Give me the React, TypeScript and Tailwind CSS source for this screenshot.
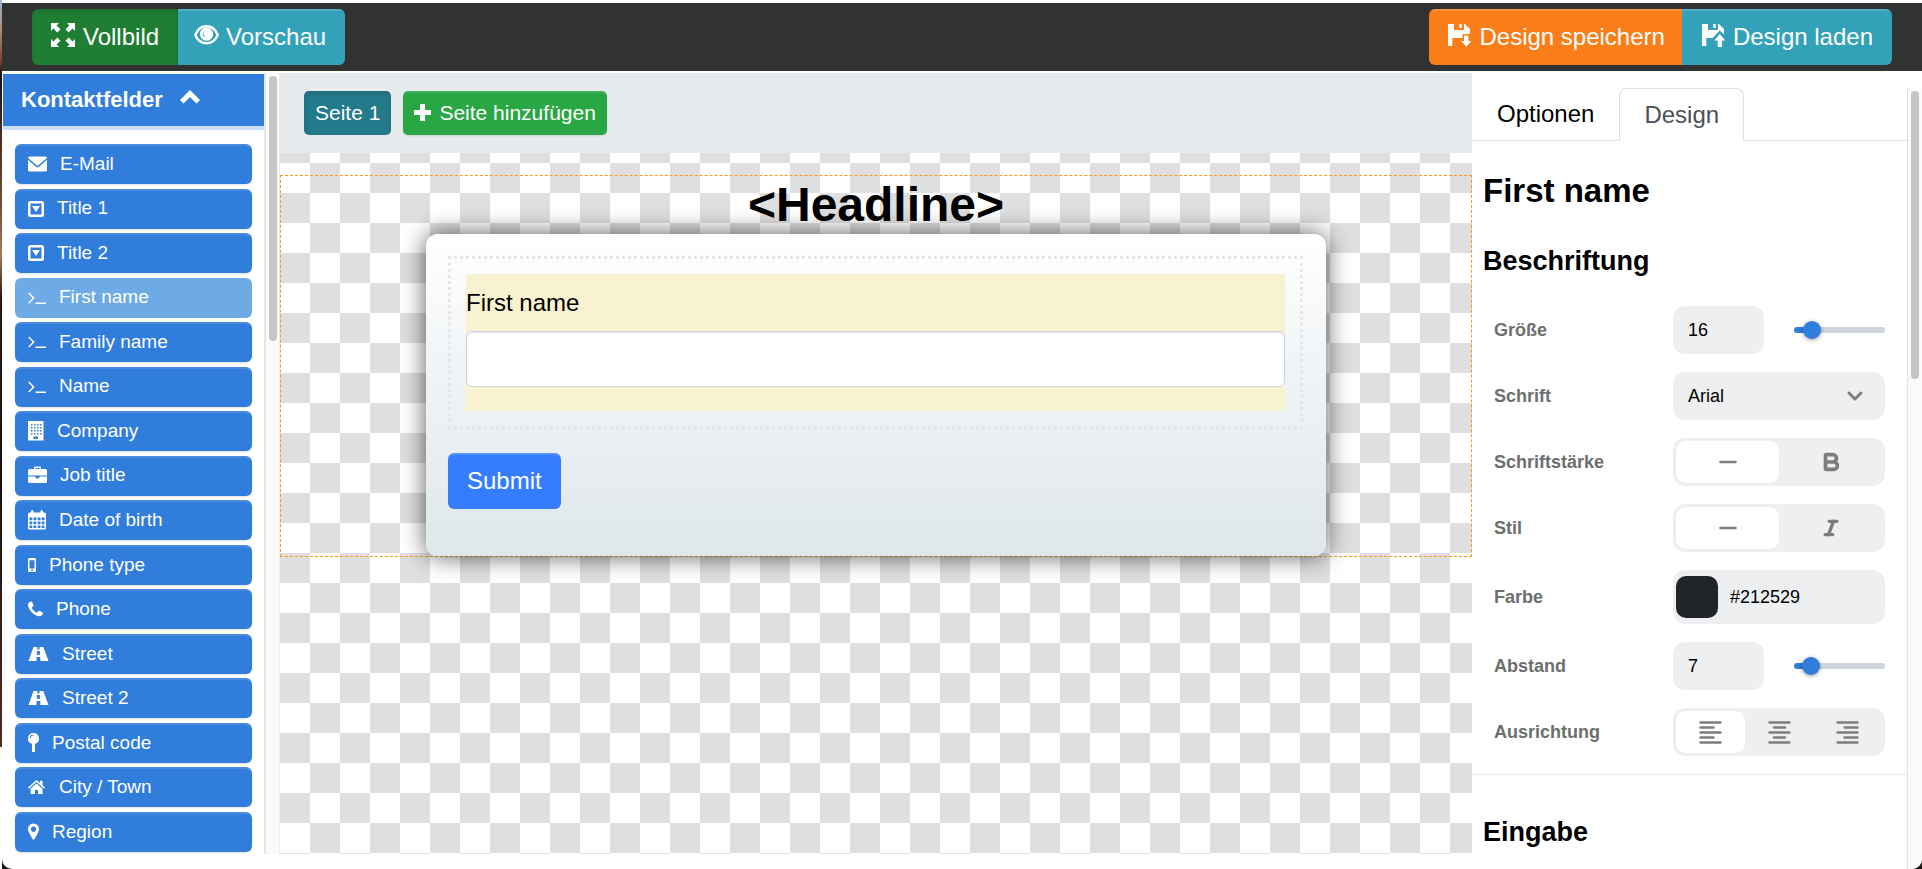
import React, { useState } from 'react';
import { Bold, ChevronDown, Italic, Minus } from 'lucide-react';

const ICON = 'shrink-0 fill-current';
const BAR_ICON = 'mb-1 shrink-0 fill-current';

const FullscreenIcon = () => (
    <svg width="24" height="24" viewBox="0 0 24 24" className={BAR_ICON}>
        <path d="M0 0h8L5.6 2.4l3.9 3.9-3.2 3.2-3.9-3.9L0 8z" />
        <path d="M24 0v8l-2.4-2.4-3.9 3.9-3.2-3.2 3.9-3.9L16 0z" />
        <path d="M0 24v-8l2.4 2.4 3.9-3.9 3.2 3.2-3.9 3.9L8 24z" />
        <path d="M24 24h-8l2.4-2.4-3.9-3.9 3.2-3.2 3.9 3.9L24 16z" />
    </svg>
);

const EyeIcon = () => (
    <svg width="25" height="24" viewBox="0 0 25 24" className={BAR_ICON}>
        <path
            d="M1.300 12C3.500 6.500 7.500 3.300 12.500 3.300S21.500 6.500 23.700 12C21.500 17.300 17.500 20.300 12.500 20.300S3.500 17.300 1.300 12z"
            fill="none"
            stroke="currentColor"
            strokeWidth="2.400"
            strokeLinejoin="round"
        />
        <path fillRule="evenodd" d="M12.500 4.500a6.600 6.600 0 1 1 0 13.200 6.600 6.600 0 0 1 0-13.200zM10.800 7.800a4 4 0 0 0-1.500 5.500l2.700.700a3.500 3.500 0 0 1-1.200-6.200z" />
    </svg>
);

const SaveIcon = () => (
    <svg width="24" height="24" viewBox="0 0 24 24" className={BAR_ICON}>
        <path d="M1 1h6v6h10V1h1l5 5v5h-7.500v4H5.300v8H1z" />
        <path d="M12.300 1h2.400v4h-2.400zM17 12.500h4.300V18H24.500l-5.300 5.800L14 18h3z" />
    </svg>
);

const LoadIcon = () => (
    <svg width="24" height="24" viewBox="0 0 24 24" className={BAR_ICON}>
        <path d="M1 1h6v6h10V1h1l5 5v5.500L18.800 7.500 11.500 15H5.300v8H1z" />
        <path d="M12.300 1h2.400v4h-2.400zM18.800 11l5.500 6.500h-3.400V24h-4.200v-6.500H13.300z" />
    </svg>
);

// Feld-Icons, alle 20px hoch, Breite je nach Glyph
const shapes: Record<string, { w: number; art: React.ReactNode }> = {
    mail: {
        w: 19,
        art: <path d="M1.500 2.500h16a1.500 1.500 0 0 1 1.500 1.500l-9.500 8L0 4a1.500 1.500 0 0 1 1.500-1.500zM0 5.800l8 6.900c1 .8 2 .8 3 0l8-6.900V16a1.500 1.500 0 0 1-1.500 1.500h-16A1.500 1.500 0 0 1 0 16z" />,
    },
    caret: {
        w: 16,
        art: <path fillRule="evenodd" d="M2.500 2h11A2.500 2.500 0 0 1 16 4.500v11a2.500 2.500 0 0 1-2.500 2.500h-11A2.500 2.500 0 0 1 0 15.500v-11A2.500 2.500 0 0 1 2.500 2zm0 2.500v11h11v-11zM4 7h8l-4 6z" />,
    },
    terminal: {
        w: 18,
        art: <path d="M.3 5.600l1-1L6.700 10l-5.400 5.400-1-1L4.600 10zM7.500 14.500H18v1.500H7.500z" />,
    },
    building: {
        w: 16,
        art: (
            <path
                fillRule="evenodd"
                d="M0 0h15.500v19.500H0zM3 3v1.500h1.500V3zm3 0v1.500h1.500V3zm3 0v1.500h1.500V3zm3 0v1.500h1.500V3zM3 6v1.500h1.500V6zm3 0v1.500h1.500V6zm3 0v1.500h1.500V6zm3 0v1.500h1.500V6zM3 9v1.500h1.500V9zm3 0v1.500h1.500V9zm3 0v1.500h1.500V9zm3 0v1.500h1.500V9zM3 12v1.500h1.500V12zm9 0v1.500h1.500V12zM6 12v1.500h1.500V12zm3 0v1.500h1.500V12zm-3.500 3.500V18H10v-2.500z"
            />
        ),
    },
    briefcase: {
        w: 19,
        art: (
            <path
                fillRule="evenodd"
                d="M6 3V1.800Q6 .5 7.300.5h4.400Q13 .5 13 1.800V3h4.500q1.500 0 1.500 1.500V9.500H0V4.500Q0 3 1.500 3zM7.500 2v1h4V2zM0 10.500h7.300v.5q.3 1.500 2.200 1.500t2.200-1.500v-.5H19V15.500q0 1.500-1.500 1.500h-16Q0 17 0 15.500z"
            />
        ),
    },
    calendar: {
        w: 18,
        art: (
            <>
                <path d="M0 4q0-1.500 1.500-1.500H3V1.500Q3 0 4.300 0t1.300 1.500v1h6.800v-1Q12.400 0 13.700 0T15 1.500v1h1.500Q18 2.500 18 4v3H0z" />
                <path fillRule="evenodd" d="M0 6h18v12q0 1.500-1.500 1.500h-15Q0 19.500 0 18zm1.500 1.500v2.800h2.800V7.500zm4 0v2.800h2.800V7.500zm4.200 0v2.800h2.800V7.500zm4 0v2.800h2.800V7.500zm-12.200 4v2.800h2.800v-2.800zm4 0v2.800h2.800v-2.800zm4.200 0v2.800h2.800v-2.800zm4 0v2.800h2.800v-2.800zm-12.200 4v2.500h2.800v-2.500zm4 0v2.500h2.800v-2.500zm4.200 0v2.500h2.800v-2.500zm4 0v2.500h2.800v-2.500z" />
            </>
        ),
    },
    mobile: {
        w: 8,
        art: <path fillRule="evenodd" d="M1.500 3h5Q8 3 8 4.500v11Q8 17 6.500 17h-5Q0 17 0 15.500v-11Q0 3 1.500 3zm0 2.300v8.200h5V5.300zM4 14.300a.9.9 0 1 0 .1 0z" />,
    },
    phone: {
        w: 15,
        art: <path d="M3.300 2.600C4 2.500 5.600 6 5.600 6.500c0 1-1.800 1.600-1.800 2.200C3.800 9.900 7.600 13.600 8.900 13.600c.6 0 1.300-1.800 2.200-1.800.6 0 3.900 1.700 3.900 2.200 0 2-1.800 3.200-3.700 3.200C6.500 17.200 0 10.700 0 6c0-1.800 1.300-3.300 3.300-3.400z" />,
    },
    road: {
        w: 21,
        art: <path fillRule="evenodd" d="M5.500 3h3.800v2.500h2.200V3h3.800L20.500 17h-8.200v-4H8.500v4H.5zM9 7l-.3 3.800h3.400L11.800 7z" />,
    },
    pin: {
        w: 11,
        art: <path fillRule="evenodd" d="M5.500 0a5.500 5.500 0 0 1 1.500 10.800V19H4v-8.200A5.500 5.500 0 0 1 5.500 0zm-.3 1.500A3.800 3.800 0 0 0 1.700 5h.9A2.900 2.900 0 0 1 5.200 2.400z" />,
    },
    home: {
        w: 18,
        art: <path d="M8.500 3l3.500 3.100V3.700h2.600v4.700l2.600 2.300-1 1.100L8.500 5 .9 11.800l-1-1.100zM8.500 6.500l6 5.300V17H10v-4H7v4H2.600v-5.200z" />,
    },
    marker: {
        w: 11,
        art: <path fillRule="evenodd" d="M5.500 1.500A5.500 5.500 0 0 1 11 7c0 2-.8 3.200-1.500 4.700L6.500 17q-1 1.500-2 0l-3-5.300C.8 10.200 0 9 0 7a5.500 5.500 0 0 1 5.500-5.500zm0 3a2.700 2.700 0 1 0 .1 0z" />,
    },
};

const fields = [
    { label: 'E-Mail', icon: 'mail' },
    { label: 'Title 1', icon: 'caret' },
    { label: 'Title 2', icon: 'caret' },
    { label: 'First name', icon: 'terminal' },
    { label: 'Family name', icon: 'terminal' },
    { label: 'Name', icon: 'terminal' },
    { label: 'Company', icon: 'building' },
    { label: 'Job title', icon: 'briefcase' },
    { label: 'Date of birth', icon: 'calendar' },
    { label: 'Phone type', icon: 'mobile' },
    { label: 'Phone', icon: 'phone' },
    { label: 'Street', icon: 'road' },
    { label: 'Street 2', icon: 'road' },
    { label: 'Postal code', icon: 'pin' },
    { label: 'City / Town', icon: 'home' },
    { label: 'Region', icon: 'marker' },
];

const TopBar = () => (
    <header className="flex h-[68px] shrink-0 items-center justify-between bg-[#313333] pl-[30px] pr-[30px] text-[24px] text-white">
        <div className="flex h-14 overflow-hidden rounded-md">
            <button className="flex items-center gap-2 bg-[#1f7e34] px-[19px] shadow-[inset_0_3px_5px_rgba(0,0,0,0.13)]">
                <FullscreenIcon />
                Vollbild
            </button>
            <button className="flex items-center gap-[7px] bg-[#33a2b9] pl-4 pr-[19px] shadow-[inset_0_2px_0_rgba(255,255,255,0.15)]">
                <EyeIcon />
                Vorschau
            </button>
        </div>
        <div className="flex h-14 overflow-hidden rounded-md">
            <button className="flex items-center gap-2 bg-[#f97e18] pl-[18px] pr-[17px] shadow-[inset_0_2px_0_rgba(255,255,255,0.15)]">
                <SaveIcon />
                Design speichern
            </button>
            <button className="flex items-center gap-2 bg-[#33a2b9] px-[19px] shadow-[inset_0_2px_0_rgba(255,255,255,0.15)]">
                <LoadIcon />
                Design laden
            </button>
        </div>
    </header>
);

const Sidebar = () => (
    <aside className="mb-[15px] flex w-[278px] shrink-0">
        <div className="flex min-h-0 flex-1 flex-col border-r-2 border-[#e4e4e4] pl-px pt-px">
            <button className="box-content flex h-[50px] shrink-0 items-center gap-[17px] border-b-4 border-[#cadffb] bg-[#307ddb] pb-0.5 pl-[18px] text-[22px] font-bold text-white">
                Kontaktfelder
                <svg width="20" height="20" viewBox="0 0 20 20" className={ICON}>
                    <path d="M10 1l10 10-3.500 3.500L10 8l-6.500 6.500L0 11z" />
                </svg>
            </button>
            <ul className="flex min-h-0 flex-1 flex-col justify-between overflow-hidden pb-0.5 pl-3 pr-3 pt-[14px]">
                {fields.map((field) => {
                    const shape = shapes[field.icon];
                    return (
                        <li key={field.label}>
                            <button
                                className={
                                    field.label === 'First name'
                                        ? 'flex h-10 w-full items-center gap-[13px] rounded-md bg-[#6eaae6] pl-[13px] text-[19px] text-white'
                                        : 'flex h-10 w-full items-center gap-[13px] rounded-md bg-[#307ddb] pl-[13px] text-[19px] text-white shadow-[inset_0_2px_0_rgba(255,255,255,0.12),0_1px_2px_rgba(0,0,0,0.12)]'
                                }
                            >
                                <svg width={shape.w} height="20" viewBox={`0 0 ${shape.w} 20`} className={ICON}>
                                    {shape.art}
                                </svg>
                                {field.label}
                            </button>
                        </li>
                    );
                })}
            </ul>
        </div>
        <div className="w-[14px] border-r border-[#ececec] bg-[#fafafa] pl-[3px] pt-[3px]">
            <div className="h-[34%] w-2 rounded-full bg-[#c5c5c5]" />
        </div>
    </aside>
);

const Canvas = () => (
    <main className="mb-[15px] flex min-w-0 flex-1 flex-col">
        <div className="flex h-20 shrink-0 gap-3 bg-[#e8ebee] pl-6 pt-[18px] text-[21px] text-white">
            <button className="h-11 rounded-[5px] bg-[#237a8b] px-[11px] shadow-[inset_0_3px_5px_rgba(0,0,0,0.13)]">Seite 1</button>
            <button className="flex h-11 items-center gap-2 rounded-[5px] bg-[#2aa745] px-[11px] shadow-[inset_0_2px_0_rgba(255,255,255,0.12),0_1px_2px_rgba(0,0,0,0.12)]">
                <svg width="17" height="20" viewBox="0 0 17 20" className={ICON}>
                    <path d="M6 1h5v6h6v5h-6v6H6v-6H0V7h6z" />
                </svg>
                Seite hinzufügen
            </button>
        </div>
        <div className="min-h-0 flex-1 overflow-hidden bg-[repeating-conic-gradient(#dfdfdf_0_25%,#ffffff_0_50%)] bg-[length:60px_60px] bg-[position:0_10px] pt-[22px]">
            <section className="border border-dashed border-[#f79a1c]">
                <h1 className="text-center text-[48px] font-bold leading-[58px]">&lt;Headline&gt;</h1>
                <form
                    className="mx-auto max-w-[900px] rounded-xl bg-[linear-gradient(#ffffff,#eff3f6_45%,#dfe7ea)] pb-[47px] pl-[22px] pr-[23px] pt-[22px] shadow-[0_0_24px_rgba(0,0,0,0.65)]"
                    onSubmit={(e) => e.preventDefault()}
                >
                    <div className="border-[3px] border-dotted border-[#e6e6e6] p-[15px]">
                        <div className="bg-[#f9f2d0] pb-6">
                            <label htmlFor="firstname" className="flex h-[57px] items-center text-[24px]">
                                First name
                            </label>
                            <input
                                id="firstname"
                                type="text"
                                className="block h-14 w-full rounded-md border border-[#ced1dc] bg-white px-4 text-[24px] shadow-[inset_0_1px_2px_rgba(0,0,0,0.1)]"
                            />
                        </div>
                    </div>
                    <button
                        type="submit"
                        className="mt-6 block h-14 rounded-md bg-[#367cff] px-[19px] text-[24px] text-white shadow-[inset_0_2px_0_rgba(255,255,255,0.15)]"
                    >
                        Submit
                    </button>
                </form>
            </section>
        </div>
    </main>
);

const Row = ({ label, id, children }: { label: string; id: string; children: React.ReactNode }) => (
    <div className="flex items-center justify-between">
        <label htmlFor={id} className="text-[18px] font-bold text-[#6b6f6e]">
            {label}
        </label>
        <div className="w-[212px]">{children}</div>
    </div>
);

const SizeControl = ({ id, start, max }: { id: string; start: number; max: number }) => {
    const [value, setValue] = useState(start);
    return (
        <div className="flex items-center justify-between">
            <input
                id={id}
                type="text"
                value={value}
                onChange={(e) => setValue(Number(e.target.value) || 0)}
                className="h-12 w-[91px] rounded-xl bg-[#eeeff1] px-[15px] text-[18px]"
            />
            <input
                type="range"
                aria-label={id}
                min={0}
                max={max}
                value={value}
                onChange={(e) => setValue(Number(e.target.value))}
                className="h-1.5 w-[91px] appearance-none rounded-full bg-[#d0d4de] bg-[linear-gradient(#307ddb,#307ddb)] bg-no-repeat [&::-webkit-slider-thumb]:size-[18px] [&::-webkit-slider-thumb]:appearance-none [&::-webkit-slider-thumb]:rounded-full [&::-webkit-slider-thumb]:bg-[#307ddb] [&::-webkit-slider-thumb]:shadow-[0_1px_4px_rgba(0,0,0,0.4)]"
                style={{ backgroundSize: `${(value / max) * 80 + 8}% 100%` }}
            />
        </div>
    );
};

const Segments = ({ id, items }: { id: string; items: { name: string; icon: React.ReactNode }[] }) => {
    const [active, setActive] = useState(0);
    return (
        <div role="group" className="flex h-12 rounded-xl bg-[#eeeff1] p-[3px] text-[#7b7d7e]">
            {items.map((item, i) => (
                <button
                    key={item.name}
                    id={i === 0 ? id : undefined}
                    aria-label={item.name}
                    aria-pressed={i === active}
                    onClick={() => setActive(i)}
                    className={
                        i === active
                            ? 'flex flex-1 items-center justify-center rounded-[10px] bg-white'
                            : 'flex flex-1 items-center justify-center rounded-[10px]'
                    }
                >
                    {item.icon}
                </button>
            ))}
        </div>
    );
};

const AlignIcon = ({ d }: { d: string }) => (
    <svg width="23" height="23" viewBox="0 0 23 23" fill="none" stroke="currentColor" strokeWidth="2.400" strokeLinecap="round">
        <path d={d} />
    </svg>
);

const DesignPanel = () => (
    <aside className="flex w-[450px] shrink-0 pt-[15px]">
        <div className="min-w-0 flex-1 overflow-hidden">
            <nav className="flex h-[53px] border-b border-[#dee0e4] text-[24px]">
                <a href="#optionen" className="flex items-center px-[25px]">
                    Optionen
                </a>
                <a href="#design" className="-mb-px flex items-center rounded-t-lg border border-b-0 border-[#dee0e4] bg-white px-6 text-[#495057]">
                    Design
                </a>
            </nav>
            <h2 className="mt-[30px] pl-[11px] text-[33px] font-bold leading-10">First name</h2>
            <h3 className="mt-[34px] pl-[11px] text-[27px] font-bold leading-8">Beschriftung</h3>
            <div className="mt-[29px] flex flex-col gap-[18px] border-b border-[#e8e9eb] px-[22px] pb-[18px]">
                <Row label="Größe" id="groesse">
                    <SizeControl id="groesse" start={16} max={130} />
                </Row>
                <Row label="Schrift" id="schrift">
                    <div className="relative">
                        <select id="schrift" className="h-12 w-full appearance-none rounded-xl bg-[#eeeff1] px-[15px] text-[18px]">
                            <option>Arial</option>
                            <option>Verdana</option>
                        </select>
                        <ChevronDown size={24} strokeWidth={3} className="pointer-events-none absolute right-[18px] top-3 text-[#7b7d7e]" />
                    </div>
                </Row>
                <Row label="Schriftstärke" id="staerke">
                    <Segments
                        id="staerke"
                        items={[
                            { name: 'Normal', icon: <Minus size={26} strokeWidth={2.2} /> },
                            { name: 'Fett', icon: <Bold size={22} strokeWidth={4} /> },
                        ]}
                    />
                </Row>
                <Row label="Stil" id="stil">
                    <Segments
                        id="stil"
                        items={[
                            { name: 'Normal', icon: <Minus size={26} strokeWidth={2.2} /> },
                            { name: 'Kursiv', icon: <Italic size={20} strokeWidth={4} /> },
                        ]}
                    />
                </Row>
                <Row label="Farbe" id="farbe">
                    <div className="flex h-[54px] items-center gap-3 rounded-xl bg-[#eeeff1] pl-[3px] pr-3">
                        <input
                            type="color"
                            aria-label="Farbe wählen"
                            defaultValue="#212529"
                            className="size-[42px] shrink-0 appearance-none overflow-hidden rounded-[10px] bg-[#212529] [&::-webkit-color-swatch-wrapper]:p-0 [&::-webkit-color-swatch]:border-0"
                        />
                        <input id="farbe" type="text" defaultValue="#212529" className="w-full min-w-0 bg-transparent text-[18px]" />
                    </div>
                </Row>
                <Row label="Abstand" id="abstand">
                    <SizeControl id="abstand" start={7} max={66} />
                </Row>
                <Row label="Ausrichtung" id="ausrichtung">
                    <Segments
                        id="ausrichtung"
                        items={[
                            { name: 'Links', icon: <AlignIcon d="M1.500 1.500h20M1.500 6.500h13M1.500 11.500h20M1.500 16.500h13M1.500 21.500h20" /> },
                            { name: 'Zentriert', icon: <AlignIcon d="M1.500 1.500h20M6 6.500h11M1.500 11.500h20M6 16.500h11M1.500 21.500h20" /> },
                            { name: 'Rechts', icon: <AlignIcon d="M1.500 1.500h20M8.500 6.500h13M1.500 11.500h20M8.500 16.500h13M1.500 21.500h20" /> },
                        ]}
                    />
                </Row>
            </div>
            <h3 className="mt-[41px] pl-[11px] text-[27px] font-bold leading-8">Eingabe</h3>
        </div>
        <div className="w-[15px] shrink-0 border-l border-[#e4e4e4] bg-[#fafafa] pl-[3px] pt-[3px]">
            <div className="h-[37%] w-2 rounded-full bg-[#c5c5c5]" />
        </div>
    </aside>
);

const App = () => {
    return (
        <div className="flex h-screen overflow-hidden bg-[#1b1512] font-['Liberation_Sans',Arial,sans-serif] text-black">
            <div className="flex w-0.5 shrink-0 flex-col bg-white">
                <div className="h-[86%] bg-[linear-gradient(#9db6dc,#b08a78_4%,#7a4a30_8%,#1d1210_10%,#7a5038_28%,#a87a60_34%,#2a1712_40%,#1b1010_65%,#4f2c20)]" />
            </div>
            <div className="flex min-w-0 flex-1 flex-col gap-0.5 overflow-hidden rounded-b-[10px] bg-white pt-[3px]">
                <TopBar />
                <div className="flex min-h-0 flex-1">
                    <Sidebar />
                    <Canvas />
                    <DesignPanel />
                </div>
            </div>
        </div>
    );
};

export default App;
